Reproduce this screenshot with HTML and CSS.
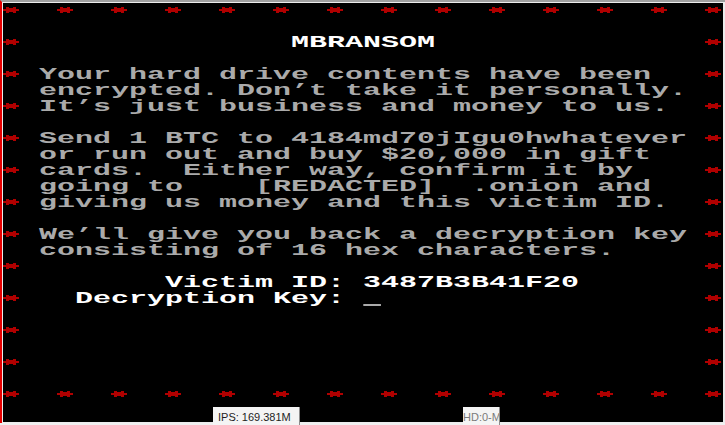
FILE: index.html
```
<!DOCTYPE html>
<html>
<head>
<meta charset="utf-8">
<link rel="stylesheet" href="styles.css">
</head>
<body>
<svg class="defs" xmlns="http://www.w3.org/2000/svg">
  <symbol id="ast" viewBox="0 0 16 6">
    <rect x="3" y="0" width="3" height="1"/>
    <rect x="10" y="0" width="3" height="1"/>
    <rect x="3" y="1" width="10" height="1"/>
    <rect x="0" y="2" width="16" height="2"/>
    <rect x="3" y="4" width="10" height="1"/>
    <rect x="3" y="5" width="3" height="1"/>
    <rect x="10" y="5" width="3" height="1"/>
  </symbol>
</svg>
<div class="frame">
  <div class="screen">
    <div class="border-row">
      <svg class="star"><use href="#ast"/></svg><svg class="star"><use href="#ast"/></svg><svg class="star"><use href="#ast"/></svg><svg class="star"><use href="#ast"/></svg><svg class="star"><use href="#ast"/></svg><svg class="star"><use href="#ast"/></svg><svg class="star"><use href="#ast"/></svg><svg class="star"><use href="#ast"/></svg><svg class="star"><use href="#ast"/></svg><svg class="star"><use href="#ast"/></svg><svg class="star"><use href="#ast"/></svg><svg class="star"><use href="#ast"/></svg><svg class="star"><use href="#ast"/></svg><svg class="star"><use href="#ast"/></svg>
    </div>
    <div class="middle">
      <div class="side">
        <svg class="star"><use href="#ast"/></svg><svg class="star"><use href="#ast"/></svg><svg class="star"><use href="#ast"/></svg><svg class="star"><use href="#ast"/></svg><svg class="star"><use href="#ast"/></svg><svg class="star"><use href="#ast"/></svg><svg class="star"><use href="#ast"/></svg><svg class="star"><use href="#ast"/></svg><svg class="star"><use href="#ast"/></svg><svg class="star"><use href="#ast"/></svg><svg class="star"><use href="#ast"/></svg>
      </div>
      <div class="content">
        <div class="line"></div>
        <div class="line hi">               MBRANSOM</div>
        <div class="line"></div>
        <div class="line"> Your hard drive contents have been</div>
        <div class="line"> encrypted. Don’t take it personally.</div>
        <div class="line"> It’s just business and money to us.</div>
        <div class="line"></div>
        <div class="line"> Send 1 BTC to 4184md70jIgu0hwhatever</div>
        <div class="line"> or run out and buy $20,000 in gift</div>
        <div class="line"> cards.  Either way, confirm it by</div>
        <div class="line"> going to    [REDACTED]  .onion and</div>
        <div class="line"> giving us money and this victim ID.</div>
        <div class="line"></div>
        <div class="line"> We’ll give you back a decryption key</div>
        <div class="line"> consisting of 16 hex characters.</div>
        <div class="line"></div>
        <div class="line hi">        Victim ID: 3487B3B41F20</div>
        <div class="line"><span class="hi">   Decryption Key: </span><span class="cursor"></span></div>
      </div>
      <div class="side">
        <svg class="star"><use href="#ast"/></svg><svg class="star"><use href="#ast"/></svg><svg class="star"><use href="#ast"/></svg><svg class="star"><use href="#ast"/></svg><svg class="star"><use href="#ast"/></svg><svg class="star"><use href="#ast"/></svg><svg class="star"><use href="#ast"/></svg><svg class="star"><use href="#ast"/></svg><svg class="star"><use href="#ast"/></svg><svg class="star"><use href="#ast"/></svg><svg class="star"><use href="#ast"/></svg>
      </div>
    </div>
    <div class="border-row">
      <svg class="star"><use href="#ast"/></svg><svg class="star"><use href="#ast"/></svg><svg class="star"><use href="#ast"/></svg><svg class="star"><use href="#ast"/></svg><svg class="star"><use href="#ast"/></svg><svg class="star"><use href="#ast"/></svg><svg class="star"><use href="#ast"/></svg><svg class="star"><use href="#ast"/></svg><svg class="star"><use href="#ast"/></svg><svg class="star"><use href="#ast"/></svg><svg class="star"><use href="#ast"/></svg><svg class="star"><use href="#ast"/></svg><svg class="star"><use href="#ast"/></svg><svg class="star"><use href="#ast"/></svg>
    </div>
  </div>
</div>
<div class="statusbar">
  <div class="stat ips">IPS: 169.381M</div>
  <div class="stat hd">HD:0-M</div>
</div>
</body>
</html>
```
FILE: styles.css
```
html, body {
  margin: 0;
  padding: 0;
}
body {
  width: 725px;
  height: 425px;
  overflow: hidden;
  background: #f0f0f0;
  position: relative;
}
.defs {
  display: none;
}
.frame {
  border-top: 2px solid #a0a0a0;
  border-left: 2px solid #e60000;
  padding: 1px 0 0 1px;
  background: #ececec;
  height: 423px;
  box-sizing: border-box;
}
.screen {
  width: 720px;
  height: 419px;
  background: #000;
  overflow: hidden;
}
.border-row {
  display: flex;
  justify-content: space-between;
  height: 16px;
}
.star {
  display: block;
  width: 16px;
  height: 6px;
  margin: 4px 2px 6px 0;
  fill: #b00000;
}
.middle {
  display: flex;
  height: 368px;
}
.side {
  display: flex;
  flex-direction: column;
  gap: 16px;
  padding-top: 16px;
  width: 18px;
}
.content {
  flex: 1;
  overflow: hidden;
  font-family: "Liberation Mono", monospace;
  font-weight: bold;
  font-size: 17px;
  color: #aaaaaa;
}
.line {
  height: 16px;
  line-height: 16px;
  white-space: pre;
  transform: scaleX(1.7644);
  transform-origin: 0 0;
}
.hi {
  color: #ffffff;
}
.cursor {
  display: inline-block;
  width: 1ch;
  height: 2px;
  background: #aaaaaa;
  vertical-align: -3px;
}
.statusbar {
  position: absolute;
  left: 213px;
  top: 407px;
  display: flex;
  height: 18px;
}
.stat {
  background: #f4f4f4;
  font-family: "Liberation Sans", Arial, sans-serif;
  font-size: 11px;
  line-height: 18px;
  padding-top: 1px;
  height: 18px;
  box-sizing: border-box;
  border-right: 1px solid #8c8c8c;
  white-space: nowrap;
  overflow: hidden;
}
.ips {
  width: 87px;
  padding-left: 5px;
  color: #1e1e1e;
}
.hd {
  margin-left: 163px;
  width: 37px;
  color: #7a7a7a;
}
```
